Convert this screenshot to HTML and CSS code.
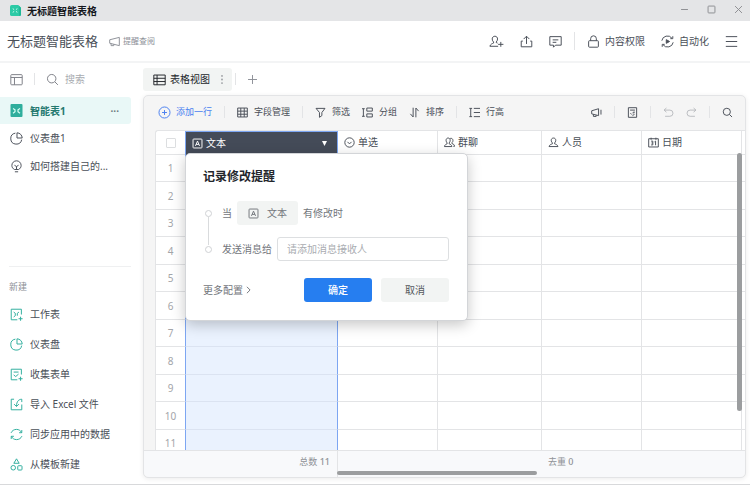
FILE: index.html
```html
<!DOCTYPE html>
<html lang="zh-CN">
<head>
  <meta charset="UTF-8" />
  <meta name="viewport" content="width=device-width, initial-scale=1.0"/>
  <title>无标题智能表格</title>
  <link rel="stylesheet" href="styles.css">
</head>
<body>
  <!-- shared icons -->
  <svg class="sprite" aria-hidden="true">
    <symbol id="i-search" viewBox="0 0 16 16"><circle cx="7" cy="7" r="5.2"/><path d="M11 11l3.6 3.6"/></symbol>
    <symbol id="i-pie" viewBox="0 0 16 16"><path d="M6.6 1.4A6.8 6.8 0 1 0 14.4 9.4"/><path d="M8.6 1v6.4H15A6.5 6.5 0 0 0 8.600 1z"/></symbol>
    <symbol id="i-text" viewBox="0 0 16 16"><rect x="1.500" y="1.500" width="13" height="13" rx="1"/><path d="M5 11.500L8 4.500l3 7M6 9.300h4"/></symbol>
    <symbol id="i-user" viewBox="0 0 16 16"><path d="M8 1.500c-2 0-3.300 1.400-3.300 3.300 0 1.900.8 3 1.700 3.800v1.300c-1.800.8-4.400 1.400-4.900 4h13c-.5-2.600-3.100-3.200-4.900-4V8.600c.9-.8 1.700-1.900 1.700-3.800C11.300 2.900 10 1.500 8 1.500z"/></symbol>
  </svg>

  <div class="app">
    <div class="titlebar">
      <svg class="app-logo" viewBox="0 0 12 12"><path fill="#2ccaa6" d="M2 0h7l3 3v7a2 2 0 0 1-2 2H2a2 2 0 0 1-2-2V2a2 2 0 0 1 2-2z"/><path fill="#1fb896" d="M10 1l2 2v7a2 2 0 0 1-2 2z"/><path stroke="#d8fff4" stroke-width="1" fill="none" d="M3 4l1.500 1M3 8l1.500-1M8 4L6.500 5M8 8L6.500 7"/></svg>
      <span class="titlebar-name">无标题智能表格</span>
      <div class="window-buttons">
        <button type="button" aria-label="最小化"><svg class="icon-s" viewBox="0 0 16 16"><path d="M3 8h10"/></svg></button>
        <button type="button" aria-label="最大化"><svg class="icon-s" viewBox="0 0 16 16"><rect x="3" y="3" width="10" height="10" rx="1"/></svg></button>
        <button type="button" aria-label="关闭"><svg class="icon-s" viewBox="0 0 16 16"><path d="M3 3l10 10M13 3L3 13"/></svg></button>
      </div>
    </div>

    <header class="header">
      <h1>无标题智能表格</h1>
      <a class="remind-link" href="#">
        <svg class="icon-s" viewBox="0 0 16 16"><path d="M1 5.500l14-3.500v12L1 10.500zM3 11v3h4v-2"/></svg>
        提醒查阅
      </a>
      <div class="header-actions">
        <button type="button" aria-label="添加成员"><svg class="icon-wide" viewBox="0 0 18 16"><path d="M7 1.500C5 1.500 3.700 3 3.700 4.900c0 1.800.8 2.900 1.700 3.700v1.300c-1.700.8-4 1.400-4.500 4H11M10.300 10c-.6-.3-1-.5-1.700-.8V8.600c.9-.8 1.700-1.900 1.700-3.700C10.300 3 9 1.500 7 1.500M11 11.500h6.500M14.300 8.500v6"/></svg></button>
        <button type="button" aria-label="分享"><svg class="icon-l" viewBox="0 0 16 16"><path d="M8 11V1.500M4.500 5L8 1.500 11.500 5M3.500 7.500h-2v7h13v-7h-2"/></svg></button>
        <button type="button" aria-label="评论"><svg class="icon-l" viewBox="0 0 16 16"><path d="M1 2h14v10.500H8L5.500 15v-2.500H1zM4.500 6h7M4.500 9H9"/></svg></button>
        <span class="divider"></span>
        <button type="button"><svg class="icon-l" viewBox="0 0 16 16"><rect x="2" y="7" width="12" height="8" rx="1"/><path d="M4.500 7V4.500a3.500 3.500 0 0 1 7 0V7"/></svg>内容权限</button>
        <button type="button"><svg class="icon-l" viewBox="0 0 16 16"><path d="M1 7A7 7 0 0 1 13.500 4M15 9A7 7 0 0 1 2.500 12M14.500 1.500v3h-3M1.500 14.500v-3h3"/><path class="solid" d="M6.500 5.700v4.600L10.500 8z"/></svg>自动化</button>
        <button type="button" aria-label="菜单"><svg class="icon-l" viewBox="0 0 16 16"><path d="M1 2h14M1 8h14M1 14h14"/></svg></button>
      </div>
    </header>

    <div class="body">
      <aside class="sidebar">
        <div class="sidebar-top">
          <button type="button" aria-label="收起侧栏"><svg class="icon-m" viewBox="0 0 16 16"><rect x="1" y="2" width="14" height="12.500" rx="1"/><path d="M1 5.500h14M5.500 5.500v9"/></svg></button>
          <span class="divider"></span>
          <label class="search">
            <svg class="icon-m"><use href="#i-search"/></svg>
            <input type="text" placeholder="搜索" aria-label="搜索">
          </label>
        </div>
        <nav class="nav">
          <a class="active" href="#"><svg class="icon-m" viewBox="0 0 12 13"><rect class="sheet-bg" width="12" height="13" rx="1"/><path stroke="#d8fff4" d="M2.500 4.500l2 1.300v2l-2 1.500M9.500 4.500l-2 1.300v2l2 1.500"/></svg>智能表1<span class="more">···</span></a>
          <a href="#"><svg class="icon-m"><use href="#i-pie"/></svg>仪表盘1</a>
          <a href="#"><svg class="icon-m" viewBox="0 0 16 16"><path d="M5.500 11.700C3.500 10.700 2.300 8.900 2.300 6.700a5.700 5.700 0 0 1 11.400 0c0 2.200-1.200 4-3.200 5zM6 14.500h4M5.500 6.500L8 8l2.500-1.500M8 8v3.500"/></svg>如何搭建自己的...</a>
        </nav>
        <div class="create">
          <h2>新建</h2>
          <a href="#"><svg class="icon-m" viewBox="0 0 16 16"><path d="M14 8V1.500H1.500v13H9M4.500 5l2 1.500v3L4.500 11M11 5L9 6.500v3M10.500 13.200h5M13 10.700v5"/></svg>工作表</a>
          <a href="#"><svg class="icon-m"><use href="#i-pie"/></svg>仪表盘</a>
          <a href="#"><svg class="icon-m" viewBox="0 0 16 16"><path d="M14 8V1.500H1.500v13H9M4.500 5h6M4.500 8.500L7 10.500l3.500-3M10.500 13.200h5M13 10.700v5"/></svg>收集表单</a>
          <a href="#"><svg class="icon-m" viewBox="0 0 16 16"><path d="M5 1.500H1.500v13h13V8M14.500 5V1.500C11 1.500 8 4 8 10M5 7.500L8 10.500l3-3"/></svg>导入 Excel 文件</a>
          <a href="#"><svg class="icon-m" viewBox="0 0 16 16"><path d="M1.300 6C2.500 3.300 5 1.700 8 1.700s5 1.600 6.300 4M14.700 10c-1.200 2.700-3.700 4.300-6.700 4.300s-5-1.600-6.300-4M14.500 2.500v3.300h-3.300M1.500 13.500v-3.300h3.300"/></svg>同步应用中的数据</a>
          <a href="#"><svg class="icon-m" viewBox="0 0 16 16"><path d="M8 1l3.300 5.500H4.700z"/><circle cx="4" cy="12" r="2.800"/><rect x="9.500" y="9.500" width="5.300" height="5.300" rx="1"/></svg>从模板新建</a>
        </div>
      </aside>

      <main class="main">
        <div class="tabs">
          <div class="tab">
            <svg class="icon-m" viewBox="0 0 16 16"><path d="M1 2.500h14v12H1zM1 6.500h14M1 10.500h14M5 2.500v12"/></svg>
            表格视图
            <button type="button" class="tab-more" aria-label="视图选项"><svg viewBox="0 0 2 10"><circle cx="1" cy="1" r="1"/><circle cx="1" cy="5" r="1"/><circle cx="1" cy="9" r="1"/></svg></button>
          </div>
          <span class="divider"></span>
          <button type="button" class="tab-add" aria-label="新建视图"><svg class="icon-s" viewBox="0 0 16 16"><path d="M8 1.500v13M1.500 8h13"/></svg></button>
        </div>

        <section class="panel">
          <div class="toolbar">
            <button type="button" class="add-row"><svg class="icon-m" viewBox="0 0 16 16"><circle cx="8" cy="8" r="6.800"/><path d="M8 5v6M5 8h6"/></svg>添加一行</button>
            <span class="divider"></span>
            <button type="button"><svg class="icon-s" viewBox="0 0 16 16"><path d="M1 1.500h14v13H1zM1 6h14M1 10.500h14M5.500 1.500v13M10.500 1.500v13"/></svg>字段管理</button>
            <span class="divider"></span>
            <button type="button"><svg class="icon-s" viewBox="0 0 16 16"><path d="M1.500 2h13L10 8v4.500L6.500 15V8z"/></svg>筛选</button>
            <button type="button"><svg class="icon-s" viewBox="0 0 16 16"><path d="M7 1.500h8v4.500H7zM7 10h8v4.500H7zM0 2.500h4M2 2.500v11M0 13.500h4"/></svg>分组</button>
            <button type="button"><svg class="icon-s" viewBox="0 0 16 16"><path d="M6 1v13.500L2 10M10 15V1.500L14 6"/></svg>排序</button>
            <span class="divider"></span>
            <button type="button"><svg class="icon-s" viewBox="0 0 16 16"><path d="M7 2h9M7 8h9M7 14h9M2.500 2v12M.5 2h4M.5 14h4"/></svg>行高</button>
            <div class="toolbar-right">
              <button type="button" aria-label="提醒"><svg class="icon-s" viewBox="0 0 16 16"><path d="M1 5.500L11 2.500v10L1 10zM3.500 10.700v3h4v-2M14.500 4v7"/></svg></button>
              <span class="divider"></span>
              <button type="button" aria-label="收集表"><svg class="icon-s" viewBox="0 0 16 16"><path d="M2 1h12v14H2zM4.500 4.500h7M5 9l2 2M11.500 7.500H9v2M8 12.500l3-2"/></svg></button>
              <span class="divider"></span>
              <button type="button" class="off" aria-label="撤销"><svg class="icon-s" viewBox="0 0 16 16"><path d="M5 1.500L1.500 4.500 5 7.500M1.500 4.500H10a4.500 4.500 0 0 1 0 9H3"/></svg></button>
              <button type="button" class="off" aria-label="重做"><svg class="icon-s" viewBox="0 0 16 16"><path d="M11 1.500l3.500 3L11 7.500M14.500 4.500H6a4.500 4.500 0 0 0 0 9h7"/></svg></button>
              <span class="divider"></span>
              <button type="button" aria-label="查找"><svg class="icon-s"><use href="#i-search"/></svg></button>
            </div>
          </div>

          <div class="sheet">
            <table>
              <colgroup><col class="c-num"><col class="c-text"><col class="c-std"><col class="c-group"><col class="c-std"><col class="c-std"><col></colgroup>
              <thead>
                <tr>
                  <th><input type="checkbox" aria-label="全选"></th>
                  <th class="selected"><div class="field"><svg class="icon-s"><use href="#i-text"/></svg>文本<svg class="caret" viewBox="0 0 6 6"><path d="M0 0h6L3 6z"/></svg></div></th>
                  <th><div class="field"><svg class="icon-s" viewBox="0 0 16 16"><circle cx="8" cy="8" r="6.800"/><path d="M5 7l3 3 3-3"/></svg>单选</div></th>
                  <th><div class="field"><svg class="icon-s" viewBox="0 0 16 16"><path d="M6 1.500c-1.800 0-3 1.400-3 3.300 0 1.900.8 3 1.500 3.800v1.300c-1.500.8-3.500 1.400-4 4h11c-.5-2.600-2.500-3.200-4-4V8.600C8.300 7.800 9 6.700 9 4.800 9 2.900 7.800 1.500 6 1.500zM9 2c2.500-.5 4 1 4 3s-.8 2.500-1.500 3.300v1.200c2 .8 3.700 1.500 4 4h-2"/></svg>群聊</div></th>
                  <th><div class="field"><svg class="icon-s"><use href="#i-user"/></svg>人员</div></th>
                  <th><div class="field"><svg class="icon-s" viewBox="0 0 16 16"><path d="M1 2.500h14v12H1zM4.500 1v3M11.500 1v3M4.500 6h2.500v5.500H4.500M5 8.700h2M9.500 7l1.500-1v6"/></svg>日期</div></th>
                  <th></th>
                </tr>
              </thead>
              <tbody>
                <tr><td>1</td><td class="selected"></td><td></td><td></td><td></td><td></td><td></td></tr>
                <tr><td>2</td><td class="selected"></td><td></td><td></td><td></td><td></td><td></td></tr>
                <tr><td>3</td><td class="selected"></td><td></td><td></td><td></td><td></td><td></td></tr>
                <tr><td>4</td><td class="selected"></td><td></td><td></td><td></td><td></td><td></td></tr>
                <tr><td>5</td><td class="selected"></td><td></td><td></td><td></td><td></td><td></td></tr>
                <tr><td>6</td><td class="selected"></td><td></td><td></td><td></td><td></td><td></td></tr>
                <tr><td>7</td><td class="selected"></td><td></td><td></td><td></td><td></td><td></td></tr>
                <tr><td>8</td><td class="selected"></td><td></td><td></td><td></td><td></td><td></td></tr>
                <tr><td>9</td><td class="selected"></td><td></td><td></td><td></td><td></td><td></td></tr>
                <tr><td>10</td><td class="selected"></td><td></td><td></td><td></td><td></td><td></td></tr>
                <tr><td>11</td><td class="selected"></td><td></td><td></td><td></td><td></td><td></td></tr>
              </tbody>
            </table>
            <div class="scroll-y"></div>
          </div>

          <div class="summary">
            <div class="summary-total">总数 <b>11</b></div>
            <div class="summary-unique">去重 <b>0</b></div>
            <div class="scroll-x"></div>
          </div>

          <form class="dialog" role="dialog" aria-labelledby="dialog-title">
            <h2 id="dialog-title">记录修改提醒</h2>
            <div class="step">
              <span class="dot"></span>当
              <button type="button" class="field-chip"><svg class="icon-s"><use href="#i-text"/></svg>文本</button>
              有修改时
            </div>
            <div class="step step-last">
              <span class="dot"></span><label for="receiver">发送消息给</label>
              <input id="receiver" type="text" placeholder="请添加消息接收人">
            </div>
            <div class="dialog-footer">
              <a href="#">更多配置<svg class="chevron" viewBox="0 0 6 10"><path d="M1 1l4 4-4 4"/></svg></a>
              <button type="submit" class="btn btn-primary">确定</button>
              <button type="button" class="btn">取消</button>
            </div>
          </form>
        </section>
      </main>
    </div>
  </div>
</body>
</html>
```
FILE: styles.css
```css
:root {
  --text: #4a4f58;
  --text-light: #8d9097;
  --line: #e3e4e6;
  --teal: #2fae9d;
  --blue: #267ef0;
  --select: #7da6f2;
}

* {
  margin: 0;
  padding: 0;
  box-sizing: border-box;
}

body {
  font-family: "Noto Sans", "Noto Sans CJK SC", sans-serif;
  font-size: 10px;
  line-height: 16px;
  color: var(--text);
  background: #fff;
}

a {
  color: inherit;
  text-decoration: none;
}

button,
input {
  font: inherit;
  color: inherit;
  border: none;
  background: none;
}

button {
  display: flex;
  align-items: center;
  cursor: pointer;
}

svg {
  flex: none;
  fill: none;
  stroke: currentColor;
  stroke-width: 1.2;
}

.sprite {
  display: none;
}

.solid {
  fill: currentColor;
}

.icon-s {
  width: 11px;
  height: 11px;
  stroke-width: 1.4;
}

.icon-m {
  width: 13px;
  height: 13px;
}

.icon-l {
  width: 13px;
  height: 13px;
}

.icon-wide {
  width: 15px;
  height: 13px;
}

.divider {
  flex: none;
  width: 1px;
  height: 12px;
  background: var(--line);
}

.app {
  display: flex;
  flex-direction: column;
  height: 100vh;
  border-bottom: 1px solid #d8d9db;
  overflow: hidden;
}

/* Window title */
.titlebar {
  display: flex;
  align-items: center;
  gap: 6px;
  flex: none;
  height: 21px;
  padding: 0 6px 0 10px;
  background: #e4e5e7;
}

.app-logo {
  width: 11px;
  height: 11px;
  stroke: none;
}

.titlebar-name {
  font-weight: 700;
  color: #15181d;
}

.window-buttons {
  display: flex;
  gap: 16px;
  margin-left: auto;
  padding-bottom: 3px;
  color: #8c8e92;
}

/* Document header */
.header {
  display: flex;
  align-items: center;
  flex: none;
  height: 42px;
  padding: 0 12px 0 7px;
  border-bottom: 2px solid #f3f4f5;
}

.header h1 {
  font-size: 13px;
  font-weight: 400;
}

.remind-link {
  display: flex;
  align-items: center;
  gap: 3px;
  margin-left: 11px;
  font-size: 8px;
  color: var(--text-light);
}

.header-actions {
  display: flex;
  align-items: center;
  gap: 16px;
  margin-left: auto;
}

.header-actions button {
  gap: 5px;
}

.header-actions .divider {
  height: 18px;
  margin: 0 -4px;
}

.body {
  display: flex;
  flex: 1;
  min-height: 0;
}

/* Sidebar */
.sidebar {
  display: flex;
  flex-direction: column;
  flex: none;
  width: 143px;
}

.sidebar-top {
  display: flex;
  align-items: center;
  gap: 11px;
  height: 34px;
  padding: 0 12px 2px 10px;
  color: #7d8087;
}

.search {
  display: flex;
  align-items: center;
  gap: 6px;
}

.search input {
  width: 60px;
}

::placeholder {
  color: #a9acb1;
  opacity: 1;
}

.nav a,
.create a {
  display: flex;
  align-items: center;
  gap: 7px;
  padding-left: 10px;
}

.nav a {
  height: 28px;
  margin-right: 12px;
}

.nav .active {
  height: 27px;
  padding-right: 12px;
  border-radius: 0 3px 3px 0;
  background: #e9f8f7;
  color: #24796f;
  font-weight: 700;
}

.sheet-bg {
  fill: var(--teal);
  stroke: none;
}

.more {
  margin-left: auto;
  color: #6d7a80;
}

.create {
  margin: auto 0 0;
  padding-bottom: 5px;
}

.create h2 {
  margin: 0 12px 0 9px;
  padding: 12px 0 4px;
  border-top: 1px solid #eff0f1;
  font-size: 9px;
  font-weight: 400;
  color: var(--text-light);
}

.create a {
  height: 30px;
}

.create svg {
  color: var(--teal);
}

/* View tabs */
.main {
  display: flex;
  flex-direction: column;
  flex: 1;
  min-width: 0;
  padding: 4px 4px 6px 0;
}

.tabs {
  display: flex;
  align-items: center;
  flex: none;
  gap: 3px;
  height: 24px;
}

.tab {
  display: flex;
  align-items: center;
  gap: 4px;
  height: 23px;
  padding: 0 9px 0 10px;
  border-radius: 3px;
  background: #f2f4f3;
  color: #24272c;
}

.tab-more {
  margin-left: 7px;
}

.tab-more svg {
  width: 2px;
  height: 9px;
  fill: #9a9da2;
  stroke: none;
}

.tab-add {
  margin-left: 8px;
  color: var(--text-light);
}

/* Sheet panel */
.panel {
  position: relative;
  display: flex;
  flex-direction: column;
  flex: 1;
  min-height: 0;
  margin-top: 4px;
  border: 1px solid var(--line);
  border-radius: 5px;
  background: #f5f5f5;
  box-shadow: 0 1px 5px rgba(0, 0, 0, 0.08);
}

.toolbar {
  display: flex;
  align-items: center;
  gap: 12px;
  flex: none;
  height: 34px;
  padding: 0 12px 2px 14px;
  font-size: 9px;
}

.toolbar button {
  gap: 6px;
}

.toolbar .add-row {
  gap: 5px;
  color: #4a7ff0;
}

.toolbar-right {
  display: flex;
  align-items: center;
  gap: 12px;
  margin-left: auto;
}

.toolbar .off {
  color: #b9bbbf;
}

.sheet {
  position: relative;
  flex: 1;
  min-height: 0;
  margin-left: 11px;
  border-top: 1px solid var(--line);
  border-left: 1px solid var(--line);
  border-radius: 3px 0 0 0;
  overflow: hidden;
  background: #fff;
}

table {
  width: 100%;
  table-layout: fixed;
  border-collapse: separate;
  border-spacing: 0;
}

.c-num { width: 29px; }
.c-text { width: 153px; }
.c-std { width: 100px; }
.c-group { width: 104px; }

th,
td {
  height: 28px;
  border-right: 1px solid var(--line);
  border-bottom: 1px solid var(--line);
}

th {
  height: 24px;
  font-weight: 400;
  text-align: left;
  line-height: 14px;
}

tbody tr:nth-child(odd) td {
  height: 27px;
}

td:first-child,
th:first-child {
  text-align: center;
  border-right: none;
  color: #a3a5a9;
}

th:last-child,
td:last-child {
  border-right: none;
}

td.selected {
  border-left: 1px solid var(--select);
  border-right: 1px solid var(--select);
  border-bottom-color: #dbe3f1;
  background: #eaf2fe;
}

th.selected {
  border: 1px solid var(--select);
  border-bottom: none;
  background: #444b58;
  color: #fff;
}

th input {
  appearance: none;
  display: block;
  width: 10px;
  height: 10px;
  margin: 0 auto;
  border: 1px solid #dcdee0;
  border-radius: 1px;
}

.field {
  display: flex;
  align-items: center;
  gap: 3px;
  padding: 0 6px 1px;
}

.caret {
  width: 5px;
  height: 5px;
  margin-left: auto;
  margin-right: 4px;
  fill: #fff;
  stroke: none;
}

.scroll-y {
  position: absolute;
  top: 22px;
  right: 3px;
  bottom: 39px;
  width: 5px;
  border-radius: 3px;
  background: #9b9d9f;
}

.summary {
  position: relative;
  display: flex;
  flex: none;
  height: 27px;
  border-top: 1px solid var(--line);
  border-radius: 0 0 5px 5px;
  background: #f8f9fb;
  font-size: 9px;
  line-height: 22px;
  color: #8f9297;
}

.summary b {
  font-weight: 500;
}

.summary-total {
  width: 194px;
  padding-right: 7px;
  border-right: 1px solid var(--line);
  text-align: right;
}

.summary-unique {
  padding-left: 210px;
}

.scroll-x {
  position: absolute;
  left: 193px;
  bottom: 2px;
  width: 200px;
  height: 4px;
  border-radius: 2px;
  background: #9b9d9f;
}

/* Reminder dialog */
.dialog {
  position: absolute;
  top: 57px;
  left: 41px;
  width: 283px;
  padding: 15px 18px 18px 17px;
  border: 1px solid #d3d5d8;
  border-radius: 5px;
  background: #fff;
  box-shadow: 0 4px 14px rgba(0, 0, 0, 0.22);
  color: #73767c;
}

.dialog h2 {
  font-size: 12px;
  font-weight: 700;
  color: #23262b;
}

.step {
  position: relative;
  display: flex;
  align-items: center;
  gap: 5px;
  height: 24px;
  margin-top: 16px;
  padding-left: 1px;
}

.step-last {
  margin-top: 12px;
}

.step-last::before {
  content: '';
  position: absolute;
  left: 5px;
  bottom: 16px;
  width: 1px;
  height: 28px;
  background: #d9dbdd;
}

.dot {
  width: 7px;
  height: 7px;
  margin: 0 5px 0 1px;
  border: 1px solid #d0d2d5;
  border-radius: 50%;
}

.field-chip {
  gap: 8px;
  height: 24px;
  padding: 0 11px;
  border-radius: 3px;
  background: #f2f4f3;
}

.step input {
  flex: 1;
  min-width: 0;
  height: 24px;
  padding: 0 9px;
  border: 1px solid #dddfe1;
  border-radius: 3px;
}

.dialog-footer {
  display: flex;
  align-items: center;
  gap: 9px;
  margin-top: 17px;
}

.dialog-footer a {
  display: flex;
  align-items: center;
  gap: 3px;
  margin-right: auto;
}

.chevron {
  width: 5px;
  height: 8px;
}

.btn {
  justify-content: center;
  width: 68px;
  height: 24px;
  border-radius: 3px;
  background: #f2f4f3;
  color: #54575d;
}

.btn-primary {
  background: var(--blue);
  color: #fff;
  font-weight: 500;
}
```
